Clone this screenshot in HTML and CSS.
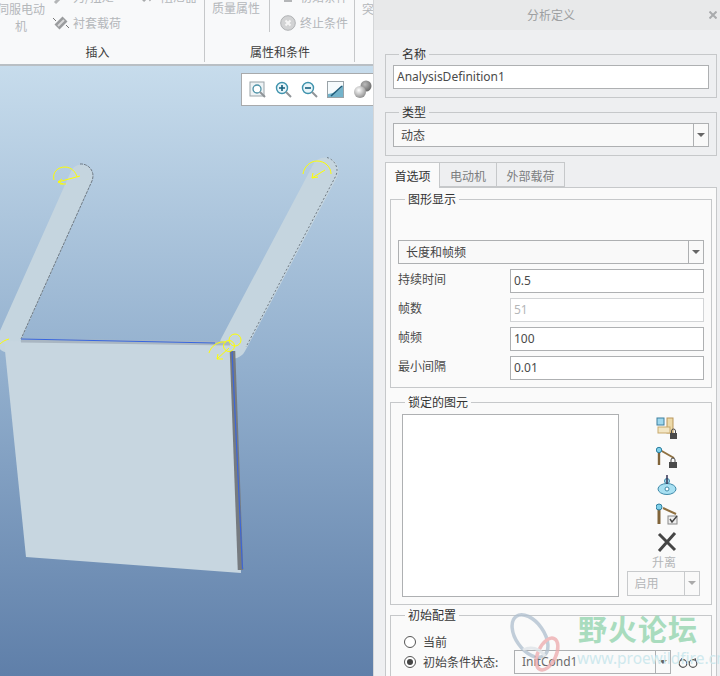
FILE: index.html
```html
<!DOCTYPE html>
<html lang="zh">
<head>
<meta charset="utf-8">
<title>分析定义</title>
<link rel="stylesheet" href="styles.css">
</head>
<body>
<div class="app">
  <div class="main">
    <div class="ribbon">
      <section class="group g1">
        <div class="tools t1">
          <div class="big">伺服电动<br>机</div>
          <div class="col c2">
            <div class="tool"><svg class="ic" viewBox="0 0 16 16"><path d="M2 14 8 8M8 8l5-5" stroke="#b4b6b8" stroke-width="3"/></svg>力/扭矩</div>
            <div class="tool"><svg class="ic" viewBox="0 0 16 16"><path d="M4 12 12 4" stroke="#9a9c9e" stroke-width="7"/><path d="M5 11 11 5" stroke="#d8d9da" stroke-width="2"/><path d="M0 3l3 3M16 13l-3-3" stroke="#777" stroke-width="1"/></svg>衬套载荷</div>
          </div>
          <div class="col c3">
            <div class="tool"><svg class="ic" viewBox="0 0 16 16"><path d="M2 12 7 7l2 3 5-6" fill="none" stroke="#a8aaac" stroke-width="3"/></svg>阻尼器</div>
          </div>
        </div>
        <div class="glabel lbl-a">插入</div>
      </section>
      <section class="group g2">
        <div class="tools t2">
          <div class="mass">质量属性</div>
          <div class="col c4">
            <div class="tool"><svg class="ic" viewBox="0 0 16 16"><path d="M4 12h8" stroke="#b4b6b8" stroke-width="2"/></svg>初始条件</div>
            <div class="tool"><svg class="ic" viewBox="0 0 16 16"><circle cx="8" cy="8" r="7.300" fill="#d2d3d4" stroke="#b0b2b4"/><path d="M5.500 5.500l5 5M10.500 5.500l-5 5" stroke="#f5f5f5" stroke-width="2"/></svg>终止条件</div>
          </div>
        </div>
        <div class="glabel lbl-b">属性和条件</div>
      </section>
      <section class="group g3"><div class="cut">突</div></section>
    </div>
    <div class="viewport">
      <svg class="scene" viewBox="0 0 373 611" width="373" height="611">
        <g transform="translate(0 -65)">
          <path d="M81.500 175 8 340" stroke="#c5d5df" stroke-width="23" stroke-linecap="round"/>
          <path d="M80 163a12 12 0 0 1 13 12c0 2-.5 4-1.500 6L21 338" fill="none" stroke="#6f7a84" stroke-width="1" stroke-dasharray="3 1"/>
          <path d="M325 170 233 344" stroke="#c5d5df" stroke-width="27" stroke-linecap="round"/>
          <path d="M327 156.500a13.500 13.500 0 0 1 10 13c0 2-.5 4-1.500 6L246 346" fill="none" stroke="#6f7a84" stroke-width="1" stroke-dasharray="2 2"/>
          <path d="M4 340 233 343 241 572 26 556Z" fill="#c7d6e0"/>
          <path d="M21 339.500 230 342.500" stroke="#a9b6c2" stroke-width="4"/>
          <path d="M21 338 215 342" stroke="#3766e0" stroke-width="1"/>
          <path d="M232.500 350 240.500 569" stroke="#767b80" stroke-width="5.500"/>
          <path d="M232 350 242.500 568" stroke="#3c66d8" stroke-width="1.200"/>
          <g fill="none" stroke="#ffff00" stroke-width="1">
            <path d="M54 179c-2-8 4-13 11-13 6 0 11 5 12 10M80 175l-22 6M58 181l4-3M58 181l5 2M60 183h6"/>
            <path d="M303 173c1-7 7-13 14-13 8 0 14 6 14 13M325 169l-13 8M312 177l1-5M312 177l6-1"/>
            <circle cx="235" cy="339" r="6"/>
            <circle cx="229" cy="345" r="5.500"/>
            <path d="M209 352c2-7 9-12 17-11M229 347l-12 11M217 358l1-5M217 358l6 0M0 343c2-2 5-4 9-5"/>
          </g>
        </g>
      </svg>
      <div class="viewbar">
        <svg class="vi" viewBox="0 0 18 18"><rect x="1" y="1" width="14" height="14" fill="#eef3f5" stroke="#9aa3a8"/><circle cx="8" cy="8" r="4" fill="#fff" stroke="#4f93a8" stroke-width="1.300"/><path d="m11 11 5 5" stroke="#8f9498" stroke-width="2"/></svg>
        <svg class="vi" viewBox="0 0 18 18"><circle cx="7" cy="7" r="5.500" fill="#eaf6fa" stroke="#3f93ad" stroke-width="1.400"/><path d="M4 7h6M7 4v6" stroke="#17607e" stroke-width="1.600"/><path d="m11 11 5 5" stroke="#8f9498" stroke-width="2"/></svg>
        <svg class="vi" viewBox="0 0 18 18"><circle cx="7" cy="7" r="5.500" fill="#eaf6fa" stroke="#3f93ad" stroke-width="1.400"/><path d="M4 7h6" stroke="#17607e" stroke-width="1.600"/><path d="m11 11 5 5" stroke="#8f9498" stroke-width="2"/></svg>
        <svg class="vi" viewBox="0 0 18 18"><rect x=".5" y=".5" width="16" height="16" fill="#73b3cb" stroke="#9aa3a8"/><path d="M1 1h15v3c-3 5-8 8-15 9Z" fill="#f6fbfd"/><path d="M4 15 15 5" stroke="#1f5a78" stroke-width="1.500"/></svg>
        <svg class="vi sphere" viewBox="0 0 20 20"><defs><radialGradient id="sa" cx=".4" cy=".35" r=".7"><stop offset="0" stop-color="#fff"/><stop offset="1" stop-color="#8a8a8a"/></radialGradient><radialGradient id="sb" cx=".4" cy=".35" r=".7"><stop offset="0" stop-color="#bbb"/><stop offset="1" stop-color="#666"/></radialGradient></defs><circle cx="13" cy="6" r="5.500" fill="url(#sb)"/><circle cx="7" cy="12" r="6" fill="url(#sa)"/></svg>
      </div>
    </div>
  </div>

  <div class="dialog">
    <div class="titlebar"><span>分析定义</span><svg class="close" viewBox="0 0 8 8"><path d="M.5.5l7 7M7.500.5l-7 7" stroke="#a9abad" stroke-width="2"/></svg></div>
    <div class="body">
      <fieldset class="fs outer-fs"><legend>名称</legend>
        <div class="input name">AnalysisDefinition1</div>
      </fieldset>
      <fieldset class="fs outer-fs type"><legend>类型</legend>
        <div class="select"><span class="sval">动态</span><span class="sarrow"></span></div>
      </fieldset>
      <div class="tabs">
        <div class="tab active">首选项</div>
        <div class="tab t-b">电动机</div>
        <div class="tab t-c">外部载荷</div>
      </div>
      <div class="panel">
        <fieldset class="fs gfx"><legend>图形显示</legend>
          <div class="select mode"><span class="sval">长度和帧频</span><span class="sarrow"></span></div>
          <div class="row"><label>持续时间</label><div class="input num">0.5</div></div>
          <div class="row"><label>帧数</label><div class="input num disabled">51</div></div>
          <div class="row"><label>帧频</label><div class="input num">100</div></div>
          <div class="row"><label>最小间隔</label><div class="input num">0.01</div></div>
        </fieldset>
        <fieldset class="fs locked"><legend>锁定的图元</legend>
          <div class="lockwrap">
            <div class="listbox"></div>
            <div class="lockside">
              <svg class="li" viewBox="0 0 22 22"><rect x="11" y="1" width="6" height="15" fill="#ecd9a8" stroke="#b9965a"/><rect x="2" y="10" width="12" height="6" fill="#f3e6c4" stroke="#c8a96c"/><rect x="1" y="1" width="7" height="7" fill="#9fd8ee" stroke="#3d7f9e"/><rect x="14" y="16" width="7" height="6" fill="#4a4a4a"/><path d="M15.500 16v-2a2 2 0 0 1 4 0v2" fill="none" stroke="#4a4a4a"/></svg>
              <svg class="li" viewBox="0 0 22 22"><path d="M3 4v15" stroke="#80643a" stroke-width="2.400"/><path d="M4 4 18 12" stroke="#8f7040" stroke-width="2"/><circle cx="3" cy="4" r="2.700" fill="#7fd0ea" stroke="#2f7f9f"/><rect x="13" y="16" width="8" height="6" fill="#4a4a4a"/><path d="M15 16v-2a2 2 0 0 1 4 0v2" fill="none" stroke="#4a4a4a"/></svg>
              <svg class="li" viewBox="0 0 22 22"><ellipse cx="11" cy="15" rx="9" ry="5.500" fill="#a8e0f2" stroke="#3f8aaa"/><circle cx="11" cy="15" r="2" fill="#fff" stroke="#3f8aaa"/><circle cx="11" cy="7" r="2.500" fill="#a8e0f2" stroke="#3f8aaa"/><path d="M11 1v9" stroke="#335" stroke-width="1.500"/></svg>
              <svg class="li" viewBox="0 0 22 22"><path d="M3 5v16" stroke="#80643a" stroke-width="3"/><path d="M7 5 20 11" stroke="#8f7040" stroke-width="2"/><circle cx="3" cy="4" r="3" fill="#7fd0ea" stroke="#2f7f9f"/><rect x="12" y="13" width="9" height="8" fill="#eee" stroke="#888"/><path d="m14 16 2 3 5-6" fill="none" stroke="#444" stroke-width="1.400"/></svg>
              <svg class="li x" viewBox="0 0 22 22"><path d="M3 3 19 19M19 2 3 20" stroke="#454545" stroke-width="3"/></svg>
              <div class="lift">升离</div>
              <div class="select mini"><span class="sval">启用</span><span class="sarrow"></span></div>
            </div>
          </div>
        </fieldset>
        <fieldset class="fs init"><legend>初始配置</legend>
          <div class="radio first"><span class="rdot"></span>当前</div>
          <div class="radio second">
            <span class="rdot on"></span><span class="rtext">初始条件状态:</span>
            <div class="select cond"><span class="sval">InitCond1</span><span class="sarrow"></span></div>
            <svg class="glasses" viewBox="0 0 20 12"><circle cx="5" cy="7.500" r="3.800" fill="none" stroke="#555" stroke-width="1.200"/><circle cx="15" cy="7.500" r="3.800" fill="none" stroke="#555" stroke-width="1.200"/><path d="M8.500 6.500c1-1 2-1 3 0M2 5l2-3M18 5l-1-3" fill="none" stroke="#555"/></svg>
          </div>
        </fieldset>
      </div>
    </div>
    <div class="watermark">
      <svg class="wm-logo" viewBox="0 0 60 62" width="60" height="62"><ellipse cx="21" cy="24" rx="14" ry="24" transform="rotate(-35 21 24)" fill="none" stroke="#aebfce" stroke-width="3.500"/><ellipse cx="38" cy="42" rx="9" ry="17" transform="rotate(25 38 42)" fill="none" stroke="#eda9ac" stroke-width="3.500"/><path d="M14 38c8-4 16-2 22 6" fill="none" stroke="#dde3e8" stroke-width="3"/></svg>
      <div class="wm-cn">野火论坛</div>
      <div class="wm-en">www.proewildfire.cn</div>
    </div>
  </div>
</div>
</body>
</html>
```

FILE: styles.css
```css
* { box-sizing: border-box; }
html, body { margin: 0; padding: 0; }
body {
  width: 720px;
  height: 676px;
  overflow: hidden;
  font: 12px/16px "Noto Sans CJK SC", "Noto Sans", sans-serif;
  color: #444;
  background: #eeeff1;
}
.app { display: flex; width: 720px; height: 676px; }
.main { width: 373px; flex: none; display: flex; flex-direction: column; overflow: hidden; }

/* ribbon */
.ribbon {
  height: 66px;
  flex: none;
  display: flex;
  background: #f8f9fa;
  border-bottom: 2px solid #b9bfc4;
  overflow: hidden;
}
.group { position: relative; display: flex; flex-direction: column; border-right: 1px solid #c6c8ca; height: 62px; flex: none; }
.g1 { width: 205px; }
.g2 { width: 150px; }
.g3 { flex: 1; border-right: 0; color: #b4b7ba; padding: 1px 0 0 7px; }
.tools { height: 44px; display: flex; color: #b4b7ba; overflow: hidden; flex: none; }
.glabel { text-align: center; color: #3c3c3c; line-height: 16px; }
.lbl-a { padding-right: 9px; }
.lbl-b { padding-left: 1px; }
.big { width: 52px; margin-left: -5px; text-align: center; line-height: 17px; flex: none; }
.col { display: flex; flex-direction: column; gap: 2px; margin-top: -15px; flex: none; }
.c2 { width: 88px; margin-left: 6px; }
.tool { display: flex; align-items: center; gap: 4px; height: 24px; white-space: nowrap; }
.ic { width: 16px; height: 16px; flex: none; }
.t2 { position: relative; }
.t2::after { content: ""; width: 1px; height: 32px; background: #c6c8ca; position: absolute; left: 64px; top: 0; }
.mass { width: 64px; padding-left: 7px; flex: none; }
.c4 { margin-left: 11px; }

/* viewport */
.viewport {
  flex: 1;
  position: relative;
  overflow: hidden;
  background: linear-gradient(#c7dcec, #93b0ce 49%, #5f7fa9);
}
.scene { position: absolute; left: 0; top: 0; }
.viewbar {
  position: absolute;
  left: 241px;
  top: 7px;
  width: 140px;
  height: 33px;
  background: #fff;
  border: 1px solid #a8aaac;
  display: flex;
  align-items: center;
  gap: 8px;
  padding-left: 7px;
}
.vi { width: 18px; height: 18px; flex: none; }
.sphere { width: 20px; height: 20px; }

/* dialog */
.dialog { position: relative; flex: 1; border-left: 1px solid #d4d6d8; background: #eeeff1; overflow: hidden; }
.titlebar {
  height: 30px;
  background: #e8e9ea;
  color: #9d9fa1;
  display: flex;
  align-items: center;
  justify-content: center;
  position: relative;
  padding-left: 8px;
}
.close { position: absolute; right: 3px; top: 11px; width: 8px; height: 8px; }
.body { padding: 16px 3px 0 11px; }
.fs { margin: 0; padding: 0; border: 1px solid #c6c8ca; min-width: 0; position: relative; }
.fs legend { margin-left: 7px; padding: 0 3px; line-height: 16px; color: #333; font-size: 12px; height: 16px; }
.outer-fs { height: 52px; padding: 3px 7px 0; }
.outer-fs legend { margin-left: 6px; }
.outer-fs.type { margin-top: 6px; }
.input {
  height: 24px;
  border: 1px solid #aeb0b2;
  background: #fff;
  line-height: 22px;
  padding-left: 3px;
  color: #4a4a4a;
}
.name { font: 12px/22px "Noto Sans", sans-serif; }
.select { display: flex; height: 24px; border: 1px solid #aeb0b2; background: #f9f9f9; line-height: 22px; }
.sval { flex: 1; padding-left: 7px; }
.sarrow { width: 15px; flex: none; border-left: 1px solid #aeb0b2; position: relative; }
.sarrow::after {
  content: "";
  position: absolute;
  left: 3px;
  top: 9px;
  border: 4px solid transparent;
  border-top: 4px solid #666;
  border-bottom: 0;
}
.tabs { display: flex; height: 25px; margin-top: 6px; }
.tab {
  border: 1px solid #c6c8ca;
  border-left: 0;
  background: #eeeff1;
  color: #7c7e80;
  height: 25px;
  line-height: 25px;
  text-align: center;
  width: 57px;
}
.tab.active { width: 55px; border-left: 1px solid #c6c8ca; border-bottom: 0; background: #fafafa; color: #333; position: relative; z-index: 1; height: 26px; }
.t-c { width: 68px; }
.panel { border: 1px solid #c6c8ca; background: #fafafa; padding: 3px 4px 0; height: 520px; }
.gfx { height: 197px; padding: 33px 7px 0; }
.mode { margin-bottom: 5px; }
.row { display: flex; align-items: flex-start; height: 24px; margin-bottom: 5px; }
.row label { width: 112px; flex: none; line-height: 20px; color: #4a4a4a; }
.num { flex: 1; font-family: "Noto Sans", sans-serif; font-size: 12px; }
.disabled { color: #b4b6b8; border-color: #d2d4d6; }
.locked { margin-top: 6px; height: 211px; padding: 4px 11px 0; }
.locked legend { margin-left: 3px; }
.lockwrap { display: flex; }
.listbox { width: 217px; height: 183px; background: #fff; border: 1px solid #aeb0b2; flex: none; }
.lockside { flex: 1; display: flex; flex-direction: column; align-items: center; margin-left: 7px; padding-top: 3px; }
.li { width: 22px; height: 22px; flex: none; margin-bottom: 6.500px; margin-left: 8px; }
.li.x { margin-bottom: 1px; }
.lift { color: #b4b6b8; line-height: 16px; margin-left: 2px; }
.mini { width: 73px; height: 25px; margin-top: 1px; color: #b4b6b8; border-color: #c8cacc; }
.mini .sarrow { border-color: #c8cacc; }
.mini .sarrow::after { border-top-color: #aaa; }
.init { margin-top: 2px; height: 80px; padding: 0 7px; }
.radio { display: flex; align-items: center; height: 20px; color: #444; }
.radio.first { margin-top: 9px; }
.radio.second { height: 24px; margin-top: -2px; }
.rdot { width: 12px; height: 12px; border: 1px solid #555; border-radius: 50%; background: #fff; margin: 0 7px 0 6px; flex: none; position: relative; }
.rdot.on::after { content: ""; position: absolute; inset: 2px; background: #444; border-radius: 50%; }
.rtext { width: 91px; flex: none; }
.cond { width: 157px; flex: none; background: transparent; }
.cond .sval { font-family: "Noto Sans", sans-serif; color: #6a6a6a; }
.glasses { width: 20px; height: 12px; margin-left: 7px; flex: none; }

/* watermark */
.watermark { position: absolute; left: 0; top: 0; width: 346px; height: 676px; pointer-events: none; }
.wm-logo { position: absolute; left: 135px; top: 612px; opacity: .75; }
.wm-cn { position: absolute; left: 204px; top: 610px; font: 700 29px/36px "Noto Sans CJK SC", sans-serif; color: #a9dcbe; letter-spacing: 1px; white-space: nowrap; }
.wm-en { position: absolute; left: 203px; top: 648px; font: 15.500px/20px "Noto Sans", sans-serif; color: #cfe9ee; white-space: nowrap; }
```
